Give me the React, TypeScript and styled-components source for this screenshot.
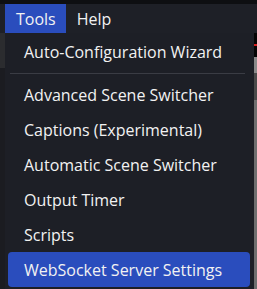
import styled, { createGlobalStyle } from 'styled-components';

const GlobalStyle = createGlobalStyle`
  html, body {
    margin: 0;
    padding: 0;
    background: #1d1f26;
  }
  body {
    font-family: 'Open Sans', 'Noto Sans', sans-serif;
    -webkit-font-smoothing: antialiased;
  }
`;

const Screen = styled.div`
  width: 257px;
  height: 289px;
  display: flex;
  flex-direction: column;
  overflow: hidden;
  background: #1d1f26;
`;

const TopStrip = styled.div`
  height: 4px;
  background: #0e0f12;
`;

const MenuBar = styled.div`
  height: 29px;
  display: flex;
  padding-left: 5px;
  background: #1e2027;
`;

const MenuTitle = styled.div<{ $open?: boolean }>`
  display: flex;
  align-items: center;
  padding: 0 10px 0 11px;
  font-size: 16px;
  color: #f2f2f2;
  background: ${({ $open }) => ($open ? '#2a4dbd' : 'transparent')};
`;

const Body = styled.div`
  flex: 1;
  display: flex;
`;

const Gutter = styled.div`
  width: 5px;
  display: flex;
  flex-direction: column;
  background: #1b1c21;
`;

const GutterPanel = styled.div`
  height: 35px;
  background: #2b2c2f;
`;

const Dropdown = styled.div`
  width: 249px;
  display: flex;
  flex-direction: column;
  padding: 1px 4px 2px 3px;
  box-sizing: border-box;
  background: #1d1f26;
`;

const Item = styled.div<{ $active?: boolean }>`
  height: 35px;
  display: flex;
  align-items: center;
  padding-left: 16px;
  border-radius: 4px;
  font-size: 16px;
  color: #f2f2f2;
  white-space: nowrap;
  background: ${({ $active }) => ($active ? '#2a4dbd' : 'transparent')};
`;

const Separator = styled.div`
  height: 1px;
  margin: 4px 5px 3px 2px;
  background: #3a3c44;
`;

const SideStrip = styled.div`
  width: 3px;
  display: flex;
  flex-direction: column;
`;

const StripDark = styled.div`
  height: 24px;
  background: #050505;
  display: flex;
  flex-direction: column;
  justify-content: center;
`;

const RedLine = styled.div`
  height: 2px;
  background: #d21f1f;
`;

const StripGrey = styled.div`
  flex: 1;
  background: linear-gradient(
    to bottom,
    #8a8a8a 0,
    #8a8a8a 16px,
    #4a4a4a 16px,
    #4a4a4a 43px,
    #6f6f6f 43px
  );
`;

const items = [
  'Advanced Scene Switcher',
  'Captions (Experimental)',
  'Automatic Scene Switcher',
  'Output Timer',
  'Scripts',
];

export default function App() {
  return (
    <>
      <GlobalStyle />
      <Screen>
        <TopStrip />
        <MenuBar>
          <MenuTitle $open>Tools</MenuTitle>
          <MenuTitle>Help</MenuTitle>
        </MenuBar>
        <Body>
          <Gutter>
            <GutterPanel />
          </Gutter>
          <Dropdown>
            <Item>Auto-Configuration Wizard</Item>
            <Separator />
            {items.map((label) => (
              <Item key={label}>{label}</Item>
            ))}
            <Item $active>WebSocket Server Settings</Item>
          </Dropdown>
          <SideStrip>
            <StripDark>
              <RedLine />
            </StripDark>
            <StripGrey />
          </SideStrip>
        </Body>
      </Screen>
    </>
  );
}
